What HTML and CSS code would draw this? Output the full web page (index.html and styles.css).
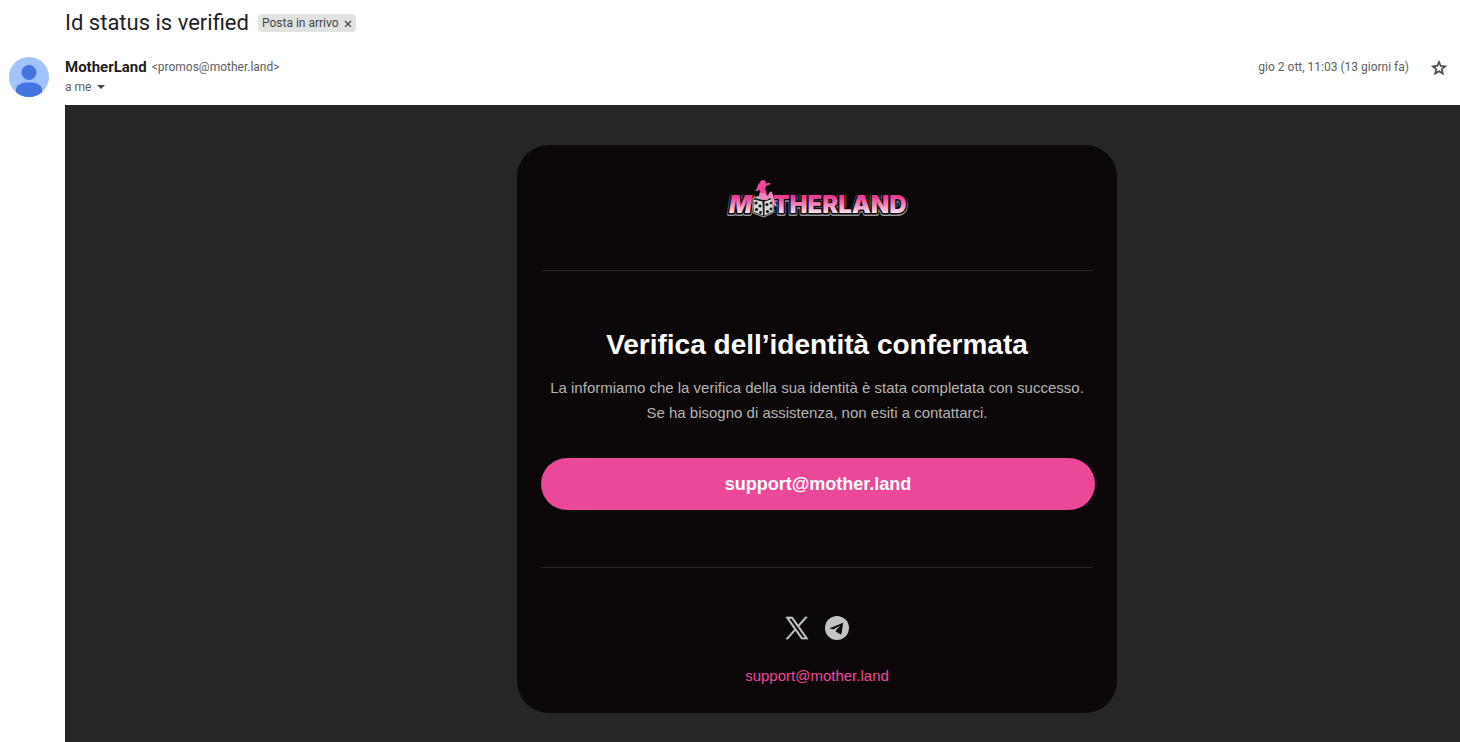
FILE: index.html
```html
<!DOCTYPE html>
<html lang="it">
<head>
<meta charset="utf-8">
<meta name="viewport" content="width=device-width, initial-scale=1">
<title>Id status is verified</title>
<link rel="stylesheet" href="styles.css">
</head>
<body>
<main class="mail">
  <header class="subject">
    <h1 class="subject-title">Id status is verified</h1>
    <span class="label">Posta in arrivo
      <button class="label-remove" type="button" aria-label="Rimuovi etichetta">
        <svg width="8" height="8" viewBox="0 0 8 8" fill="none" stroke="currentColor" stroke-width="1.200"><path d="M1 2l6 6M7 2L1 8"/></svg>
      </button>
    </span>
  </header>

  <section class="sender">
    <svg class="avatar" width="40" height="40" viewBox="0 0 40 40" aria-hidden="true">
      <clipPath id="disc"><circle cx="20" cy="20" r="20"/></clipPath>
      <g clip-path="url(#disc)">
        <rect width="40" height="40" fill="#a1c2fa"/>
        <circle cx="20" cy="15.500" r="7.500" fill="#4374e0"/>
        <path d="M7 32.500C7 28 13 25.200 20 25.200S33 28 33 32.500V41H7z" fill="#4374e0"/>
      </g>
    </svg>
    <div class="sender-info">
      <div class="sender-line"><strong class="sender-name">MotherLand</strong><span class="sender-address">&lt;promos@mother.land&gt;</span></div>
      <button class="recipient" type="button">a me
        <svg width="8" height="4" viewBox="0 0 8 4" fill="currentColor"><path d="M0 0h8L4 4z"/></svg>
      </button>
    </div>
    <time class="date">gio 2 ott, 11:03 (13 giorni fa)</time>
    <button class="star" type="button" aria-label="Speciali">
      <svg width="18" height="18" viewBox="0 0 24 24" fill="currentColor" stroke="currentColor" stroke-width=".8"><path d="M22 9.240l-7.190-.62L12 2 9.190 8.630 2 9.240l5.460 4.730L5.820 21 12 17.270 18.180 21l-1.630-7.030L22 9.240zM12 15.400l-3.760 2.270 1-4.280-3.320-2.880 4.380-.38L12 6.100l1.710 4.040 4.380.38-3.320 2.880 1 4.280L12 15.400z"/></svg>
    </button>
  </section>

  <section class="message">
    <article class="card">
      <div class="brand">
        <svg width="184" height="42" viewBox="0 0 184 42" role="img" aria-label="Motherland">
          <defs>
            <linearGradient id="pink" x1="0" y1="19" x2="0" y2="36" gradientUnits="userSpaceOnUse">
              <stop offset="0" stop-color="#e83c94"/><stop offset=".5" stop-color="#f08fc0"/><stop offset="1" stop-color="#fdf0f7"/>
            </linearGradient>
          </defs>
          <g class="wordmark">
            <g class="wordmark-rim"><text class="slanted" x="4" y="36">M</text><text x="48" y="36">THERLAND</text></g>
            <g class="wordmark-gap"><text class="slanted" x="4" y="35">M</text><text x="48" y="35">THERLAND</text></g>
            <g class="wordmark-face"><text class="slanted" x="4" y="35">M</text><text x="48" y="35">THERLAND</text></g>
          </g>
          <path d="M28 20l10-3 10 3 1 14-10 5-11-4z" fill="#1b1719" stroke="#aaa" stroke-width="1"/>
          <path d="M28.500 21.500l9 2 .5 14-9-3.500zM39.500 23.500l8-2.500.5 12.500-8.500 4z" fill="#d8d6d7"/>
          <path d="M29 20l9-2.500 9 2-8 2.500z" fill="#bbb"/>
          <g fill="#1b1719"><circle cx="31" cy="25" r="1.600"/><circle cx="35" cy="28" r="1.600"/><circle cx="31.500" cy="31.500" r="1.600"/><circle cx="35.500" cy="34.500" r="1.400"/><circle cx="42" cy="26.500" r="1.600"/><circle cx="46" cy="25" r="1.300"/><circle cx="42.500" cy="33.500" r="1.600"/><circle cx="46" cy="31" r="1.400"/></g>
          <path d="M35 4.500c.2-2.500 4-3.300 5.500-1.300l.6 2.300 3-.7 1.600.8-.7 1-3.600 1.200-1.300 2.700 1.200 3.500.5 3.500-3 1.500-4.300-1.500.7-4-.7-1.800-2 1.300-2.500-.3 2-2.400 1-3.500z" fill="#ec4899"/>
          <path d="M34.500 15l6 .5 1.800 2.500 3.200-4.500 1.600.8 2.400 8.200 2.500 5.500-1.800.5-3.800-5.500-1.500-4.500-2.400 3.500-6.500-.5-2-2.800z" fill="#f285bb"/>
        </svg>
      </div>
      <div class="content">
        <h2 class="headline">Verifica dell’identità confermata</h2>
        <p class="copy">La informiamo che la verifica della sua identità è stata completata con successo. Se ha bisogno di assistenza, non esiti a contattarci.</p>
        <a class="cta" href="mailto:support@mother.land">support@mother.land</a>
      </div>
      <footer class="footer">
        <nav class="social">
          <a href="#" aria-label="X"><svg width="24" height="24" viewBox="0 0 24 24" fill="currentColor" stroke="currentColor" stroke-width=".7"><path d="M14.100 10.300 22.300 1h-2l-7.100 8.100L7.500 1H.9l8.600 12.400L.9 23h2l7.500-8.600 6 8.600h6.600zm-2.700 3-.9-1.200L3.700 2.500h3l5.600 7.900.9 1.200 7.200 10.200h-3z"/></svg></a>
          <a href="#" aria-label="Telegram"><svg width="24" height="24" viewBox="0 0 24 24"><circle cx="12" cy="12" r="12" fill="currentColor"/><path d="M18.200 6.700L4.600 12.200l3.700 1.400 7.100-4.200-4.600 5-.2 1.200 4.700 2.700c.7.300 1 .1 1.200-.7z" fill="#0c0809"/></svg></a>
        </nav>
        <a class="footer-mail" href="mailto:support@mother.land">support@mother.land</a>
      </footer>
    </article>
  </section>
</main>
</body>
</html>
```
FILE: styles.css
```css
* { box-sizing: border-box; }

body {
  margin: 0;
  background: #fff;
  color: #1f1f1f;
  font-family: Roboto, "Liberation Sans", sans-serif;
}

button {
  margin: 0;
  padding: 0;
  border: 0;
  background: none;
  color: inherit;
  font: inherit;
  cursor: pointer;
}

svg { display: block; }

.mail {
  display: flex;
  flex-direction: column;
  min-height: 100vh;
}

.subject {
  display: flex;
  align-items: center;
  gap: 9px;
  height: 45px;
  padding-left: 65px;
}

.subject-title {
  margin: 0;
  font-size: 22px;
  font-weight: 400;
  line-height: 28px;
}

.label {
  display: flex;
  align-items: center;
  gap: 5px;
  height: 18px;
  padding: 0 4px;
  border-radius: 4px;
  background: #e1e3e1;
  color: #444746;
  font-size: 12px;
}

.sender {
  display: flex;
  height: 60px;
  padding: 12px 12px 0 9px;
  color: #5e5e5e;
  font-size: 12px;
  line-height: 20px;
}

.avatar { flex: none; }

.sender-info {
  flex: 1;
  margin-left: 16px;
}

.sender-line {
  display: flex;
  gap: 5px;
}

.sender-name {
  color: #1f1f1f;
  font-size: 15px;
  font-weight: 700;
}

.recipient {
  display: flex;
  align-items: center;
  gap: 6px;
}

.recipient svg { color: #444746; }

.star {
  align-self: flex-start;
  margin: 2px 0 0 21px;
  color: #444746;
}

.message {
  flex: 1;
  display: flex;
  justify-content: center;
  align-items: flex-start;
  margin-left: 65px;
  padding: 40px 0 29px 109px;
  background: #272526;
  font-family: "Liberation Sans", Arial, sans-serif;
}

.card {
  width: 600px;
  padding: 0 24px;
  border-radius: 32px;
  background: #0c0809;
  text-align: center;
}

.brand {
  display: flex;
  justify-content: center;
  padding: 33px 0 50px;
  border-bottom: 1px solid #272526;
}

.wordmark {
  font-family: Inter, sans-serif;
  font-size: 24px;
  font-weight: 900;
  stroke-linejoin: round;
}

.slanted { font-style: italic; }

.wordmark-rim {
  fill: #999;
  stroke: #999;
  stroke-width: 4px;
}

.wordmark-gap {
  fill: #0c0809;
  stroke: #0c0809;
  stroke-width: 3px;
}

.wordmark-face { fill: url(#pink); }

.content {
  padding: 56px 0 57px;
  border-bottom: 1px solid #272526;
}

.headline {
  margin: 0;
  color: #fff;
  font-size: 28px;
  line-height: 36px;
}

.copy {
  margin: 12px 0 33px;
  color: #b5b3b4;
  font-size: 15px;
  line-height: 25px;
}

.cta {
  display: block;
  margin-right: -2px;
  border-radius: 26px;
  background: #ec4899;
  color: #fff;
  font-size: 18px;
  font-weight: 700;
  line-height: 52px;
  text-decoration: none;
}

.footer { padding: 48px 0 26px; }

.social {
  display: flex;
  justify-content: center;
  gap: 16px;
  margin-bottom: 25px;
}

.social a { color: #c3c3c3; }

.footer-mail {
  display: block;
  color: #ec4899;
  font-size: 15px;
  line-height: 22px;
  text-decoration: none;
}
```
